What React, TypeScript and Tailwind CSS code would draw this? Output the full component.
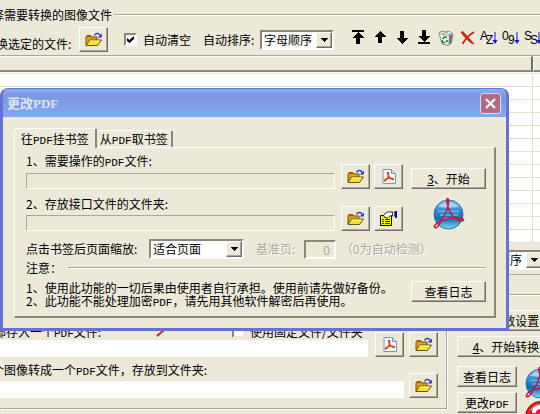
import type { ReactNode } from 'react'

const raised =
  'border border-t-white border-l-white border-r-[#716f64] border-b-[#716f64] bg-[#ece9d8] shadow-[inset_-1px_-1px_0_#aca899]'
const sunken =
  'border-2 border-t-[#8a8778] border-l-[#8a8778] border-r-white border-b-white'

function Pdf() {
  return <span className="font-['Liberation_Mono'] text-[11px] leading-none">PDF</span>
}

function ToolButton({ label, children }: { label: string; children: ReactNode }) {
  return (
    <button aria-label={label} className={`flex h-[25px] w-[29px] shrink-0 items-center justify-center ${raised}`}>
      {children}
    </button>
  )
}

function PushButton({ className, children }: { className: string; children: ReactNode }) {
  return (
    <button className={`h-[21px] shrink-0 whitespace-nowrap ${raised} ${className}`}>{children}</button>
  )
}

function Combo({ label, value, options, className }: { label: string; value: string; options: string[]; className: string }) {
  return (
    <div className={`relative h-5 shrink-0 bg-white ${sunken} ${className}`}>
      <select
        aria-label={label}
        defaultValue={value}
        className="block h-full w-full appearance-none bg-white pl-0.5 leading-4 outline-none"
      >
        {options.map(o => (
          <option key={o}>{o}</option>
        ))}
      </select>
      <span className={`pointer-events-none absolute inset-y-0 right-0 flex w-4 items-center justify-center ${raised}`}>
        <svg width="7" height="4" shapeRendering="crispEdges">
          <path d="M0 0h7v1H6v1H5v1H4v1H3V3H2V2H1V1H0z" />
        </svg>
      </span>
    </div>
  )
}

function FolderIcon() {
  return (
    <svg width="17" height="15" viewBox="0 0 17 15">
      <path d="M1 13V5l1-1.500h3.500L7 5h5v3" fill="#dca51c" stroke="#6e5200" />
      <path d="M2 4.500h4" stroke="#c65e00" strokeWidth="1.500" />
      <path d="M1 13.500 4.500 8h12L12.500 13.500z" fill="#ffdf2e" stroke="#6e5200" />
      <path d="M5 9h9.500" stroke="#fff8a0" />
      <path d="M9.500 3.500c.8-2.600 4.200-3 5.500-.2" fill="none" stroke="#1b2fc0" strokeWidth="1.200" />
      <path d="M16.800 1.500v4h-4z" fill="#1b2fc0" />
    </svg>
  )
}

function PdfIcon() {
  return (
    <svg width="14" height="15" viewBox="0 0 14 15">
      <path d="M1 .5h8.500l4 4v10H1z" fill="#f8fbff" stroke="#7095c4" />
      <path d="M9.500.5v4h4" fill="#cfe0f5" stroke="#7095c4" />
      <path d="M6 3.500c1.200 0 .6 3 0 4.500-.8 2-2.500 4.500-3.500 4 -.8-.8 2-2.800 5-3 2 0 4.500.4 4 1.300-.7 1-4-1.300-5-3.300C5.600 5.300 5.200 3.500 6 3.500z" fill="none" stroke="#e0431c" strokeWidth="1.300" />
    </svg>
  )
}

function PropertiesIcon() {
  return (
    <svg width="17" height="15" viewBox="0 0 17 15">
      <path d="M.5 4.500h11v10H.5z" fill="#fff200" stroke="#000" />
      <path d="M2 8.500h2M5 8.500h5M2 10.500h2M5 10.500h5M2 12.500h2M5 12.500h5" stroke="#000" strokeWidth=".8" />
      <path d="M3.500 4 7 1h5l1 3-4 1.500-2 2-1-1.500-1.500.5z" fill="#fff" stroke="#000" strokeWidth=".8" />
      <path d="M12.500 1h2v4h-2z" fill="#fff" stroke="#000" strokeWidth=".6" />
      <path d="M15 0h2v7h-2z" fill="#0a1590" />
    </svg>
  )
}

function Sphere({ id }: { id: string }) {
  return (
    <svg width="34" height="34" viewBox="0 0 34 34" className="shrink-0">
      <defs>
        <linearGradient id={id} x1="0" y1="0" x2="0" y2="1">
          <stop offset="0" stopColor="#9fcdf0" />
          <stop offset=".3" stopColor="#3f94d6" />
          <stop offset=".65" stopColor="#1268b4" />
          <stop offset="1" stopColor="#7be4ff" />
        </linearGradient>
      </defs>
      <circle cx="16.500" cy="17.500" r="14.500" fill={`url(#${id})`} stroke="#2a6da8" />
      <path d="M6 9.500Q16 2 27 9.500 16 12 6 9.500z" fill="#d8effc" opacity=".6" />
      <path d="M6 14.500h21M8 18h18M11 21.500h12" stroke="#8ccaf0" strokeWidth="1.500" opacity=".7" />
      <path
        d="M15.500 1.500c1.800 0 1 4 .6 7-1 6-5.600 14-9.600 20-2 2.800-4.800 3-4 .5C5 24 17 20.500 26 21c5 .3 7 2 4.500 2.800-4 1-11-4-13.500-11-1.500-4-3-11.300-1.500-11.300z"
        fill="none"
        stroke="#c5173c"
        strokeWidth="1.500"
      />
    </svg>
  )
}

function RedSphere() {
  return (
    <svg width="34" height="34" viewBox="0 0 34 34" className="shrink-0">
      <circle cx="16.500" cy="16.500" r="15" fill="#dc2027" stroke="#a30f18" />
      <path d="M5 11Q16-3 28 11 16 5 5 11z" fill="#ff9c9c" opacity=".8" />
      <path d="M10 13q0-6 7-6t7 6q0 4-7 7v4" fill="none" stroke="#fff" strokeWidth="4" />
    </svg>
  )
}

const arrows = [
  { label: '移到顶部', d: 'M0 0h12v2H0zM6 2l6 6H8v6H4V8H0z' },
  { label: '上移', d: 'M6 1l6 6H8v6H4V7H0z' },
  { label: '下移', d: 'M6 14l6-6H8V1H4v7H0z' },
  { label: '移到底部', d: 'M0 12h12v2H0zM6 12l6-6H8V0H4v6H0z' },
]

const sorts = [
  { label: '按字母排序', a: 'A', b: 'Z' },
  { label: '按数字排序', a: '0', b: '9' },
  { label: '按大小排序', a: 'S', b: 'S' },
]

function IconBar() {
  return (
    <div className="flex shrink-0 items-center gap-1.5">
      {arrows.map(a => (
        <button key={a.label} aria-label={a.label} className="flex w-4 justify-center">
          <svg width="12" height="15" shapeRendering="crispEdges">
            <path d={a.d} />
          </svg>
        </button>
      ))}
      <button aria-label="清空" className="w-4">
        <svg width="16" height="16" viewBox="0 0 16 16">
          <path d="M1 3 4 1l4 1 3-1 4 3-1.500 9-3 2.500L4 14z" fill="#f4f4f0" stroke="#8a8a86" />
          <path d="m11 5 3.500-1-1 9-3 2z" fill="#777" />
          <path d="M1.500 3.500 6 5h5l3-1.500M4 1l2 3 3-2 2 3" fill="none" stroke="#a0a09c" />
          <path d="M9 7.500 6.500 7 4.500 9M4 10l1 2.500h2M8 12.500 9.500 10" fill="none" stroke="#16862d" strokeWidth="1.500" />
        </svg>
      </button>
      <button aria-label="删除" className="w-4">
        <svg width="16" height="16" viewBox="0 0 16 16">
          <path d="M1 2 3 1.500C6 5 10 9 14 14L12 13.500C8 11 4 7 1 2z" fill="#d3200d" stroke="#b01005" strokeWidth=".6" />
          <path d="M14 2C9 5 5 9.500 2.500 14" fill="none" stroke="#d3200d" strokeWidth="1.600" />
        </svg>
      </button>
      {sorts.map(s => (
        <button key={s.label} aria-label={s.label} className="w-4">
          <svg width="16" height="16" viewBox="0 0 16 16" className="overflow-visible font-['Liberation_Sans'] text-[12px]">
            <text x="-2" y="10">{s.a}</text>
            <text x="4" y="14">{s.b}</text>
            <path d="M12.500 2h1v8h2l-2.500 4-2.500-4h2z" fill="#1414e6" />
          </svg>
        </button>
      ))}
    </div>
  )
}

function FileTable() {
  const rows = Array.from({ length: 13 }, (_, i) => i)
  return (
    <table className="w-full table-fixed border-separate border-spacing-0 bg-white">
      <thead>
        <tr>
          <th aria-label="文件" className="h-4 border-t border-r-2 border-b-2 border-t-white border-r-[#716f64] border-b-[#8a8778] bg-[#ece9d8] p-0" />
          <th aria-label="大小" className="h-4 w-[7px] border-t border-b-2 border-l border-t-white border-b-[#8a8778] border-l-white bg-[#ece9d8] p-0" />
        </tr>
      </thead>
      <tbody>
        <tr>
          <td className="h-0.5 border-b border-[#ece9d8] p-0" />
          <td className="h-0.5 border-b border-[#ece9d8] p-0" />
        </tr>
        {rows.map(r => (
          <tr key={r}>
            <td className="h-[13px] border-r border-b border-[#e4e0cc] p-0" />
            <td className="h-[13px] border-b border-[#e4e0cc] p-0" />
          </tr>
        ))}
      </tbody>
    </table>
  )
}

function OutputPane() {
  return (
    <div className="flex items-start">
      <section className="flex-1 border-r border-b border-[#aca899] pt-7 pr-2 pb-[10px] shadow-[1px_1px_0_#fff]">
        <div className="flex items-end gap-[5px]">
          <div className="flex-1 pr-0.5">
            <div className="flex items-center">
              <label htmlFor="single" className="-ml-1.5 w-[150px] whitespace-nowrap leading-[17px]">
                部存入一个<Pdf />文件:
              </label>
              <svg width="26" height="12" viewBox="0 0 26 12" className="ml-2 shrink-0">
                <path d="M5 10 12 4M18 3l3 1" stroke="#d3202c" strokeWidth="2" />
              </svg>
              <input
                id="fixed"
                type="checkbox"
                className="ml-[54px] h-[13px] w-[13px] shrink-0 appearance-none border-2 border-t-[#8a8778] border-l-[#8a8778] border-r-[#ece9d8] border-b-[#ece9d8] bg-white"
              />
              <label htmlFor="fixed" className="ml-[5px] whitespace-nowrap">使用固定文件/文件夹</label>
            </div>
            <input id="single" className="block h-[17px] w-full bg-white outline-none" />
          </div>
          <ToolButton label="选择PDF"><PdfIcon /></ToolButton>
          <ToolButton label="打开"><FolderIcon /></ToolButton>
        </div>
        <div className="mt-1 flex items-end gap-[5px]">
          <div className="flex-1">
            <label htmlFor="each" className="-ml-2 block whitespace-nowrap pb-[3px] leading-[17px]">
              个图像转成一个<Pdf />文件，存放到文件夹:
            </label>
            <input id="each" className="block h-[17px] w-full bg-white outline-none" />
          </div>
          <ToolButton label="打开文件夹"><FolderIcon /></ToolButton>
        </div>
      </section>
      <section className="w-[93px] shrink-0 pt-[15px] pl-2.5">
        <PushButton className="block w-[98px]"><u>3</u>、参数设置</PushButton>
        <PushButton className="mt-[5px] block w-[98px]"><u>4</u>、开始转换</PushButton>
        <div className="mt-[9px] flex gap-[7px]">
          <div className="flex flex-col gap-[5px]">
            <PushButton className="w-[60px]">查看日志</PushButton>
            <PushButton className="w-[60px]">更改<Pdf /></PushButton>
          </div>
          <div className="flex flex-col">
            <Sphere id="sphere-main" />
            <RedSphere />
          </div>
        </div>
      </section>
    </div>
  )
}

function PathRow({ id, label, children }: { id: string; label: ReactNode; children: ReactNode }) {
  return (
    <div className="flex items-end gap-1">
      <div className="flex-1 pr-0.5">
        <label htmlFor={id} className="block pb-1 leading-[14px]">{label}</label>
        <input
          id={id}
          readOnly
          className="block h-4 w-full border border-t-[#aca899] border-r-white border-b-white border-l-[#aca899] bg-[#ece9d8] outline-none"
        />
      </div>
      {children}
    </div>
  )
}

function Dialog() {
  return (
    <div
      role="dialog"
      aria-label="更改PDF"
      className="absolute top-[88px] right-[31px] left-0 overflow-hidden rounded-t-lg border-3 border-t border-[#6572d2] border-t-[#5b7bd0] bg-[#ece9d8]"
    >
      <header className="flex h-7 items-center justify-between bg-linear-to-b from-[#8fadf2] via-[#7a96df] via-25% to-[#84a8ee] pr-[5px] pl-1">
        <h2 className="text-[13px] font-bold text-[#dbe6fb]">
          更改<span className="font-['Liberation_Serif']">PDF</span>
        </h2>
        <button aria-label="关闭" className="flex h-[21px] w-[21px] items-center justify-center rounded-[3px] border border-[#dfd9ee] bg-[#b36a83]">
          <svg width="13" height="13" viewBox="0 0 13 13">
            <path d="m2 2 9 9M11 2l-9 9" stroke="#fff" strokeWidth="2.200" />
          </svg>
        </button>
      </header>
      <div className="pt-[11px] pr-2.5 pb-2.5 pl-[11px]">
        <div role="tablist" className="flex items-end">
          <button
            role="tab"
            aria-selected="true"
            className="relative z-10 -mb-px h-5 rounded-t-xs border-t border-r-2 border-l border-t-white border-r-[#8a8778] border-l-white bg-[#ece9d8] px-[6px] whitespace-nowrap"
          >
            往<Pdf />挂书签
          </button>
          <button role="tab" aria-selected="false" className="h-[17px] rounded-t-xs border-t border-r-2 border-t-white border-r-[#8a8778] px-[3px] whitespace-nowrap">
            从<Pdf />取书签
          </button>
        </div>
        <div role="tabpanel" className="border-t border-r-2 border-b-2 border-l border-t-white border-r-[#8a8778] border-b-[#8a8778] border-l-white pt-[6px] pr-2 pb-[7px] pl-[11px]">
          <div className="flex items-end gap-2">
            <div className="flex-1">
              <PathRow id="pdf-file" label={<>1、需要操作的<Pdf />文件:</>}>
                <ToolButton label="打开"><FolderIcon /></ToolButton>
                <ToolButton label="选择PDF"><PdfIcon /></ToolButton>
              </PathRow>
            </div>
            <PushButton className="w-[75px]"><u>3</u>、开始</PushButton>
          </div>
          <div className="mt-2 flex items-end gap-2">
            <div className="flex-1">
              <PathRow id="out-dir" label="2、存放接口文件的文件夹:">
                <ToolButton label="打开文件夹"><FolderIcon /></ToolButton>
                <ToolButton label="属性"><PropertiesIcon /></ToolButton>
              </PathRow>
            </div>
            <div className="flex w-[75px] justify-center">
              <Sphere id="sphere-dialog" />
            </div>
          </div>
          <div className="mt-2 flex items-center whitespace-nowrap">
            <span className="w-[123px]">点击书签后页面缩放:</span>
            <Combo label="点击书签后页面缩放" value="适合页面" options={['适合页面', '适合宽度', '实际大小']} className="w-[95px]" />
            <label htmlFor="base" className="ml-3 w-12 text-[#aca899] [text-shadow:1px_1px_0_#fff]">基准页:</label>
            <input id="base" disabled value="0" className={`h-[19px] w-8 bg-[#ece9d8] pr-1 text-right text-[#aca899] ${sunken}`} />
            <span className="ml-[5px] text-[#aca899] [text-shadow:1px_1px_0_#fff]">（0为自动检测）</span>
          </div>
          <div className="mt-px flex items-center">
            <span className="w-[42px] leading-4">注意：</span>
            <hr className="flex-1 border-t border-b border-t-[#aca899] border-b-white" />
          </div>
          <div className="mt-[5px] flex items-start">
            <p className="flex-1 leading-[13px] whitespace-nowrap">
              1、使用此功能的一切后果由使用者自行承担。使用前请先做好备份。
              <br />
              2、此功能不能处理加密<Pdf />，请先用其他软件解密后再使用。
            </p>
            <PushButton className="w-[75px]">查看日志</PushButton>
          </div>
        </div>
      </div>
    </div>
  )
}

export default function App() {
  return (
    <div className="relative h-screen overflow-hidden bg-[#ece9d8] font-['Noto_Sans_CJK_SC',sans-serif] text-[12px] leading-4 text-black">
      <div className="border-b border-[#aca899] pt-[7px] pb-[3px]">
        <div className="flex items-center gap-0.5">
          <h1 className="-ml-2 whitespace-nowrap">择需要转换的图像文件</h1>
          <hr className="flex-1 border-t border-b border-t-[#aca899] border-b-white" />
        </div>
        <div className="mt-1 flex items-center whitespace-nowrap">
          <span className="-ml-1 w-[83px] shrink-0 self-end">换选定的文件:</span>
          <ToolButton label="打开"><FolderIcon /></ToolButton>
          <span className="relative ml-4 flex shrink-0">
            <input id="auto-clear" type="checkbox" defaultChecked className={`peer h-[13px] w-[13px] appearance-none bg-white ${sunken}`} />
            <svg width="7" height="7" viewBox="0 0 7 7" className="pointer-events-none absolute top-[3px] left-[3px] hidden peer-checked:block">
              <path d="M0 2v3l2.500 2L7 3V0L2.500 4z" />
            </svg>
          </span>
          <label htmlFor="auto-clear" className="ml-1.5 shrink-0">自动清空</label>
          <span className="ml-3 w-[57px] shrink-0">自动排序:</span>
          <Combo label="自动排序" value="字母顺序" options={['字母顺序', '数字顺序']} className="w-[74px]" />
          <div className="ml-4 pb-1">
            <IconBar />
          </div>
        </div>
      </div>
      <FileTable />
      <div className="flex justify-end border-b border-[#aca899] pt-[7px] pb-1">
        <div className="-mr-1">
          <Combo label="输出排序" value="字母顺序" options={['字母顺序', '数字顺序']} className="w-[74px]" />
        </div>
      </div>
      <div className="h-5 border-b border-[#aca899] shadow-[0_1px_0_#fff]" />
      <OutputPane />
      <Dialog />
    </div>
  )
}
